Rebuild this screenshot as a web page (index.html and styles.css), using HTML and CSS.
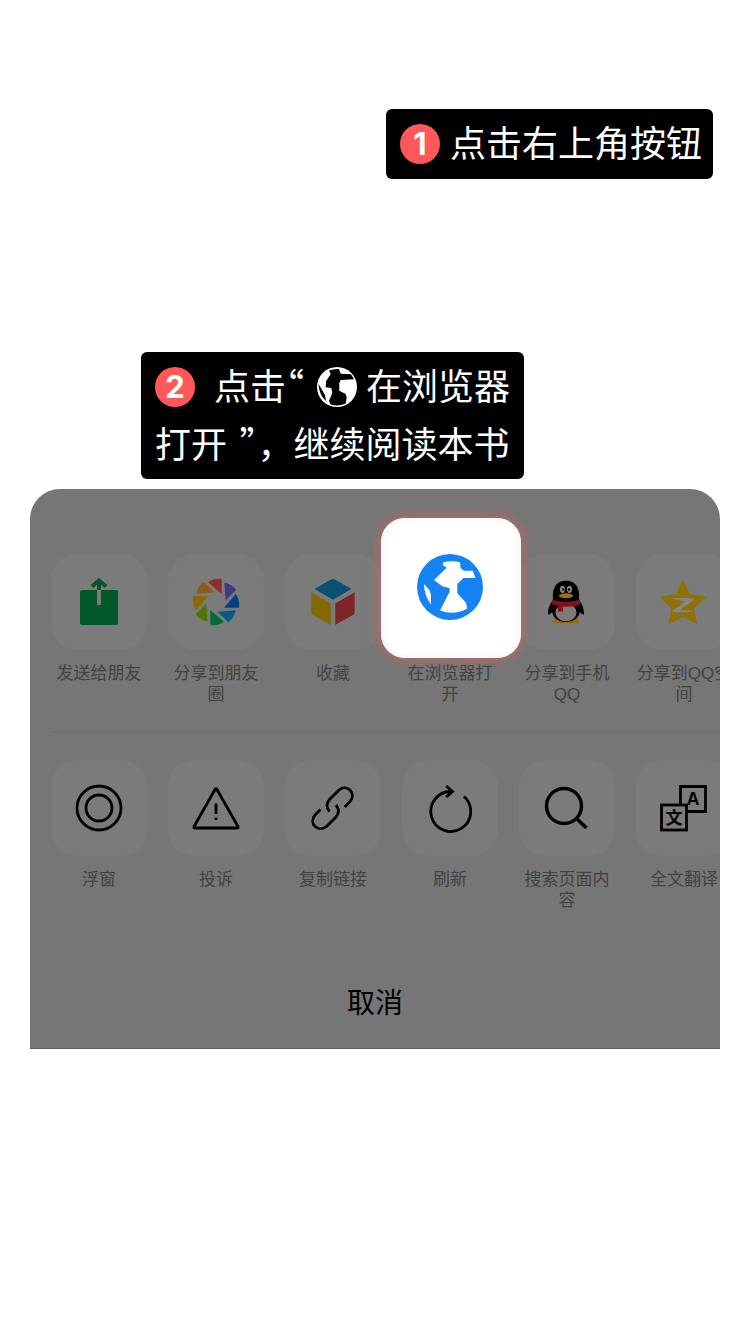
FILE: index.html
```
<!DOCTYPE html>
<html lang="zh-CN">
<head>
  <meta charset="UTF-8" />
  <meta name="viewport" content="width=device-width, initial-scale=1.0"/>
  <title>在浏览器打开</title>
  <link rel="stylesheet" href="styles.css">
</head>
<body>
  <main class="guide">
    <p class="tip tip-menu"><span class="num">1</span>点击右上角按钮</p>

    <p class="tip tip-open">
      <span class="line line-icons"><span class="num">2</span><span class="lead">点击<span class="quote">“</span></span><svg class="globe" viewBox="0 0 40 40" aria-hidden="true">
          <circle cx="20" cy="20" r="20" fill="#fff"/>
          <path d="M12 3.500Q17 1.500 22 2L23.700 6.700 34 7.300 37 12.300 23.700 13 22.300 16V23.700L28.700 27 29.700 31 28.700 36.500Q21 40 13.700 37.500L12 34 15.300 26 14.300 21 8.700 20.300 9 14.300 13.700 7zM1.500 17L4 21 8 28 9 34Q2 28 1.500 17z" fill="#000"/>
        </svg>在浏览器</span>
      <span class="line">打开 <span class="quote close">”</span>，继续阅读本书</span>
    </p>

    <section class="sheet">
      <ul class="row">
        <li><button class="item">
          <span class="tile"><svg viewBox="0 0 96 96">
            <rect x="29" y="36" width="38" height="35" rx="2" fill="#00582a"/>
            <path d="M46 36h4v15h-4z" fill="#7b7b7b"/>
            <path d="M48 36V27M41 32.500l7-6 7 6" fill="none" stroke="#00582a" stroke-width="4"/>
          </svg></span>
          <span class="label">发送给朋友</span>
        </button></li>
        <li><button class="item">
          <span class="tile"><svg viewBox="0 0 96 96">
            <defs><path id="blade" d="M-8-19.700Q-2-24 5.700-23V-8z"/></defs>
            <g transform="translate(48 48)">
              <use href="#blade" fill="#8d2d2d"/>
              <use href="#blade" fill="#403a82" transform="rotate(45)"/>
              <use href="#blade" fill="#06407f" transform="rotate(90)"/>
              <use href="#blade" fill="#075a83" transform="rotate(135)"/>
              <use href="#blade" fill="#006b36" transform="rotate(180)"/>
              <use href="#blade" fill="#4e7607" transform="rotate(225)"/>
              <use href="#blade" fill="#8a6a00" transform="rotate(270)"/>
              <use href="#blade" fill="#8c5a1b" transform="rotate(315)"/>
            </g>
          </svg></span>
          <span class="label">分享到朋友圈</span>
        </button></li>
        <li><button class="item">
          <span class="tile"><svg viewBox="0 0 96 96">
            <path d="M46 25.500q2-1 4 0L66.300 35 48 45.700 29.500 35z" fill="#0b4f75"/>
            <path d="M26.300 38.300L45.700 49.300V70.700L28 61q-1.700-1-1.700-3z" fill="#846800"/>
            <path d="M50.300 49.300L69.700 38.300V58q0 2-1.700 3L50.300 70.700z" fill="#7e2626"/>
          </svg></span>
          <span class="label">收藏</span>
        </button></li>
        <li><button class="item">
          <span class="tile">
            <svg class="spotlight" viewBox="0 0 140 140">
              <circle cx="69" cy="69" r="33" fill="#1683f2"/>
              <path d="M62 44.500Q70 42 79 44.300L79.700 50.300 83 52.700 91.700 52.700 94.500 60H82.300L76.300 66V75.300L85 84.700 86.300 90.500Q73 98 59 92.500L68.500 74V70L61.700 68.500 53 62 65.700 49.700 61.700 47zM43 66L48.300 72 50 77V86.500Q43 77 43 66z" fill="#fff"/>
            </svg>
          </span>
          <span class="label">在浏览器打开</span>
        </button></li>
        <li><button class="item">
          <span class="tile"><svg viewBox="0 0 96 96">
            <path d="M33 68.500q2-5 9-5h10q7 0 9 5-3 1-13 .5-11 .5-15-.5z" fill="#9a6c08"/>
            <path d="M34 46Q29 52 29 60q1 2 5-3zM60 46Q65 52 65 60q-1 2-5-3z" fill="#000"/>
            <path d="M34 45C33 34 37 26.700 47 26.700S61 34 60 45C64 57 60 68 47 68S30 57 34 45z" fill="#000"/>
            <ellipse cx="47" cy="58.500" rx="10.500" ry="8.700" fill="#7b7b7b"/>
            <path d="M33 45.500Q47 50 61 45.500V50.500Q54 53.500 44 52.500V57.500H39V52Q35 51 33 50z" fill="#85101b"/>
            <ellipse cx="43.500" cy="35.300" rx="2.600" ry="3.600" fill="#858585"/>
            <ellipse cx="50.500" cy="35.300" rx="2.600" ry="3.600" fill="#858585"/>
            <circle cx="44.300" cy="35.500" r="1.200" fill="#000"/>
            <circle cx="50" cy="35.500" r="1.200" fill="#000"/>
            <ellipse cx="47" cy="41.700" rx="7" ry="2.400" fill="#a07208"/>
          </svg></span>
          <span class="label">分享到手机QQ</span>
        </button></li>
        <li><button class="item">
          <span class="tile"><svg viewBox="0 0 96 96">
            <path d="M47 26.500L53.300 40.500 69.500 43.300 57.500 54.500 60.500 69.500 47 62.500 33 69.500 36 54.500 24.500 43.300 40.300 40.500z" fill="#8f7106" stroke="#8f7106" stroke-linejoin="round"/>
            <path d="M36 44.500Q46 43 57.500 44.500V46.500L44 55.500Q53 57 61.500 56.500 50 59.500 36.500 58V56.500L49.500 47.500Q42 46.500 36 44.500z" fill="#858585"/>
          </svg></span>
          <span class="label">分享到QQ空间</span>
        </button></li>
      </ul>

      <ul class="row row-tools">
        <li><button class="item">
          <span class="tile"><svg class="stroke" viewBox="0 0 96 96">
            <circle cx="48" cy="48" r="22"/>
            <circle cx="48" cy="48" r="13"/>
          </svg></span>
          <span class="label">浮窗</span>
        </button></li>
        <li><button class="item">
          <span class="tile"><svg class="stroke" viewBox="0 0 96 96">
            <path d="M47 29.500q1-1.500 2 0L70 66.500q.5 1.500-1 1.500H27q-1.500 0-1-1.500zM48 43.500V54M48 57.500V60"/>
          </svg></span>
          <span class="label">投诉</span>
        </button></li>
        <li><button class="item">
          <span class="tile"><svg class="stroke" viewBox="0 0 96 96">
            <path d="M59.700 47L65 41.500C72 33.500 62 23.500 54 30L44.500 39.500Q39.500 45.500 44.500 51.500"/>
            <path d="M35.500 49.500L30 55C23 63 33 73 41.500 66.500L51 57Q56 51 51 45"/>
          </svg></span>
          <span class="label">复制链接</span>
        </button></li>
        <li><button class="item">
          <span class="tile"><svg class="stroke" viewBox="0 0 96 96">
            <path d="M62 36.500A20 20 0 1 1 49 31.500M44.300 26L50.500 31.500 44.300 37"/>
          </svg></span>
          <span class="label">刷新</span>
        </button></li>
        <li><button class="item">
          <span class="tile"><svg class="stroke bold" viewBox="0 0 96 96">
            <circle cx="45" cy="46" r="17.500"/>
            <path d="M57.500 58.500L67.500 68"/>
          </svg></span>
          <span class="label">搜索页面内容</span>
        </button></li>
        <li><button class="item">
          <span class="tile"><svg class="stroke" viewBox="0 0 96 96">
            <path d="M44.500 45V26.500H69.500V51.500H51"/>
            <rect x="25.500" y="45" width="25" height="25"/>
            <text x="57" y="45" font-size="18">A</text>
            <text x="38" y="64" font-size="17">文</text>
          </svg></span>
          <span class="label">全文翻译</span>
        </button></li>
      </ul>

      <button class="cancel">取消</button>
    </section>
  </main>
</body>
</html>
```
FILE: styles.css
```
* {
  box-sizing: border-box;
}
body {
  font-family: "Liberation Sans", "Noto Sans CJK SC", sans-serif;
  background: #fff;
  margin: 0;
}
button {
  font-family: inherit;
  padding: 0;
  border: none;
  background: none;
  cursor: pointer;
}
.guide {
  padding: 109px 30px 0;
}

/* black tips */
.tip {
  width: fit-content;
  margin: 0;
  background: #000;
  color: #fff;
  border-radius: 6px;
  font-family: "Noto Sans", "Noto Sans CJK SC", sans-serif;
  font-size: 36px;
  line-height: 58px;
  white-space: nowrap;
}
.tip-menu {
  display: flex;
  align-items: center;
  gap: 10px;
  margin-left: auto;
  margin-right: 7px;
  padding: 6px 11px 6px 14px;
}
.tip-open {
  margin-top: 173px;
  margin-left: 111px;
  padding: 6px 14px 5px;
}
.line {
  display: block;
  white-space: pre;
}
.line-icons {
  display: flex;
  align-items: center;
}
.num {
  width: 40px;
  height: 40px;
  border-radius: 50%;
  background: #ff5858;
  font-family: Inter, sans-serif;
  font-size: 31px;
  font-weight: bold;
  line-height: 40px;
  text-align: center;
}
.lead {
  margin-left: 19px;
}
/* half-width Chinese quotes */
.quote {
  font-family: "Noto Sans CJK SC", sans-serif;
  font-feature-settings: "halt";
  line-height: 1;
}
.close {
  margin-left: 3px;
}
.globe {
  width: 40px;
  height: 40px;
  margin: 0 9px 0 13px;
}

/* share sheet */
.sheet {
  margin-top: 10px;
  padding: 65px 0 3px 21px;
  background: #767676;
  border-bottom: 1px solid #5c5c5c;
  border-radius: 30px 30px 0 0;
  overflow: hidden;
}
.row {
  display: flex;
  gap: 21px;
  height: 177px;
  margin: 0;
  padding: 0;
  list-style: none;
}
.row-tools {
  height: 206px;
  padding-top: 27px;
  border-top: 2px solid #717171;
}
.item {
  display: block;
  width: 96px;
}
.tile {
  display: block;
  position: relative;
  height: 96px;
  border-radius: 26px;
  background: #7b7b7b;
}
.tile svg {
  display: block;
}
.label {
  display: block;
  margin-top: 13px;
  color: #424242;
  font-size: 17px;
  line-height: 21px;
}
.stroke {
  fill: none;
  stroke: #000;
  stroke-width: 2.8;
}
.bold {
  stroke-width: 3.5;
}
.stroke text {
  fill: #000;
  stroke: none;
  font-weight: bold;
  text-anchor: middle;
}
.spotlight {
  position: absolute;
  top: -36px;
  left: -21px;
  z-index: 1;
  width: 140px;
  height: 140px;
  border-radius: 24px;
  background: #fff;
  box-shadow: 0 0 12px rgba(255, 88, 88, 0.7), inset 0 0 8px #eee;
}
.cancel {
  display: block;
  width: 100%;
  height: 108px;
  padding: 20px 21px 0 0;
  color: #000;
  font-size: 28px;
}
```
